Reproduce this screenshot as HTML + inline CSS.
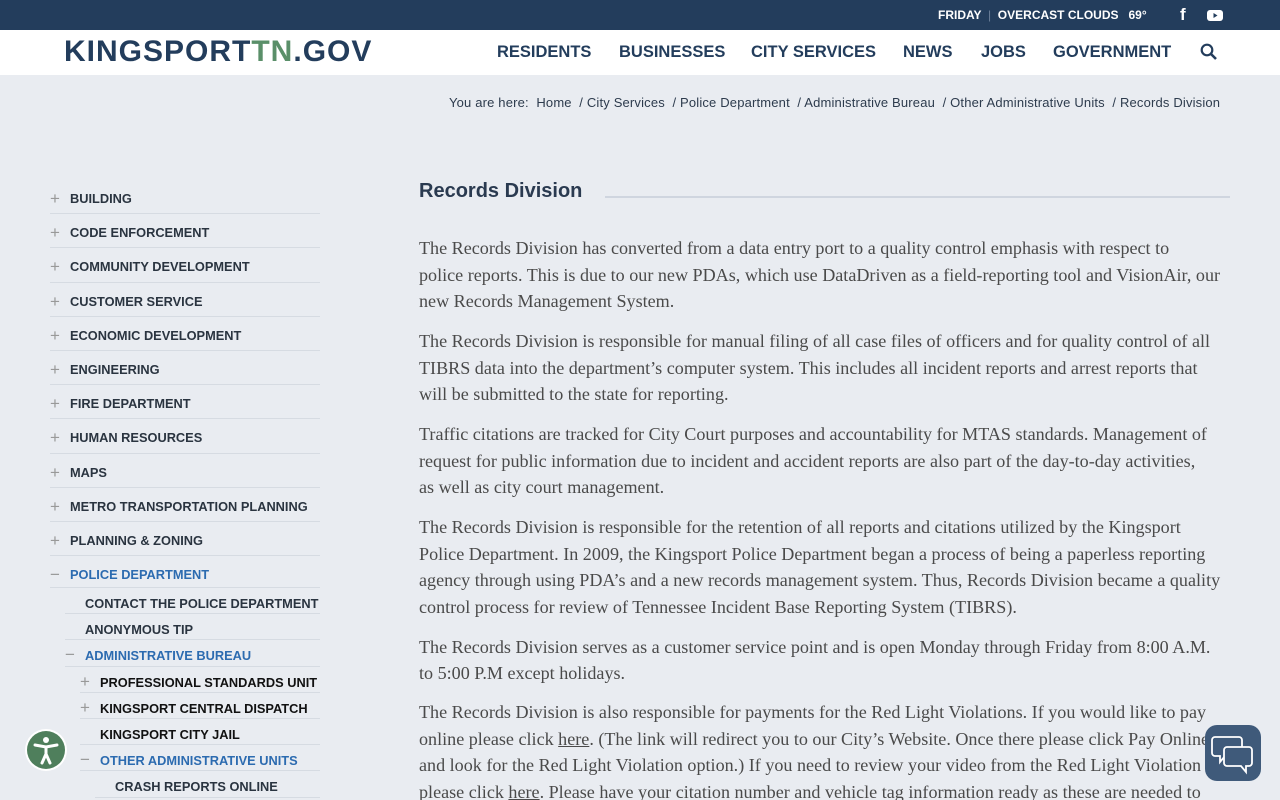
<!DOCTYPE html>
<html style="overflow:hidden;height:800px"><head><meta charset="utf-8"><style>
*{margin:0;padding:0;box-sizing:border-box}
body{width:1280px;height:800px;overflow:hidden;background:#e9ecf1;font-family:"Liberation Sans",sans-serif;position:relative}
.top{position:absolute;left:0;top:0;width:1280px;height:30px;background:#233d5c;color:#fff;font-weight:bold;font-size:12px}
.top .w{position:absolute;top:8px;left:938px;letter-spacing:0px;white-space:nowrap}
.hdr{position:absolute;top:30px;left:0;width:1280px;height:45px;background:#fff}
.logo{position:absolute;left:64px;top:5px;font-size:30px;font-weight:bold;color:#233d5c;letter-spacing:1px}
.logo span{color:#5a8f69}
.nav{position:absolute;top:13px;font-size:16.5px;font-weight:bold;color:#233d5c}
.bc{position:absolute;top:95px;left:449px;font-size:13px;color:#2d3b4d;white-space:nowrap;letter-spacing:0.17px}
.side{position:absolute;left:50px;top:180px;width:270px}
.it{position:relative;height:34.2px;border-bottom:1px solid #d6dbe2;font-size:12.8px;font-weight:bold;color:#2a3440;white-space:nowrap}
.it .t{position:absolute;top:11px}
.it .p{position:absolute;top:9px;color:#999;font-weight:normal;font-size:17px}
.sub{height:26.2px}
.sub .t{top:8px}
.sub .p{top:5px}
.blue{color:#2c6bb0!important}
h1{position:absolute;left:419px;top:180px;font-size:20px;font-weight:bold;color:#2a3a50}
.hl{position:absolute;left:605px;top:196px;width:625px;height:2px;background:#cfd5df}
.txt{position:absolute;left:419px;top:235px;font-family:"Liberation Serif",serif;font-size:18.1px;color:#4a4a4a;line-height:26.5px}
.txt div div{white-space:nowrap}
.pa{margin-bottom:13.5px}
u{text-decoration:underline}
</style></head><body>
<div class="top"><div class="w">FRIDAY &nbsp;<span style="color:#6b7f98;font-weight:normal">|</span>&nbsp; OVERCAST CLOUDS &nbsp;&nbsp;69°</div>
<div style="position:absolute;left:1180px;top:5px;font-size:17px">f</div>
<svg style="position:absolute;left:1207px;top:10px" width="16" height="11"><rect width="16" height="11" rx="3" fill="#fff"/><path d="M6.5 3v5l4-2.5z" fill="#233d5c"/></svg>
</div>
<div class="hdr"><div class="logo">KINGSPORT<span>TN</span>.GOV</div>
<div class="nav" style="left:497px">RESIDENTS</div>
<div class="nav" style="left:619px">BUSINESSES</div>
<div class="nav" style="left:751px">CITY SERVICES</div>
<div class="nav" style="left:903px">NEWS</div>
<div class="nav" style="left:981px">JOBS</div>
<div class="nav" style="left:1053px">GOVERNMENT</div>
<svg style="position:absolute;left:1200px;top:13px" width="18" height="18"><circle cx="7" cy="7" r="5.3" fill="none" stroke="#233d5c" stroke-width="2.2"/><path d="M11 11l5 5" stroke="#233d5c" stroke-width="2.6"/></svg>
</div>
<div class="bc">You are here: &nbsp;Home &nbsp;/ City Services &nbsp;/ Police Department &nbsp;/ Administrative Bureau &nbsp;/ Other Administrative Units &nbsp;/ Records Division</div>
<div class="side">
<div class="it"><span class="p" style="left:0">+</span><span class="t" style="left:20px">BUILDING</span></div>
<div class="it"><span class="p" style="left:0">+</span><span class="t" style="left:20px">CODE ENFORCEMENT</span></div>
<div class="it"><span class="p" style="left:0">+</span><span class="t" style="left:20px">COMMUNITY DEVELOPMENT</span></div>
<div class="it"><span class="p" style="left:0">+</span><span class="t" style="left:20px">CUSTOMER SERVICE</span></div>
<div class="it"><span class="p" style="left:0">+</span><span class="t" style="left:20px">ECONOMIC DEVELOPMENT</span></div>
<div class="it"><span class="p" style="left:0">+</span><span class="t" style="left:20px">ENGINEERING</span></div>
<div class="it"><span class="p" style="left:0">+</span><span class="t" style="left:20px">FIRE DEPARTMENT</span></div>
<div class="it"><span class="p" style="left:0">+</span><span class="t" style="left:20px">HUMAN RESOURCES</span></div>
<div class="it"><span class="p" style="left:0">+</span><span class="t" style="left:20px">MAPS</span></div>
<div class="it"><span class="p" style="left:0">+</span><span class="t" style="left:20px">METRO TRANSPORTATION PLANNING</span></div>
<div class="it"><span class="p" style="left:0">+</span><span class="t" style="left:20px">PLANNING &amp; ZONING</span></div>
<div class="it" style="height:32px"><span class="p" style="left:0">−</span><span class="t blue" style="left:20px">POLICE DEPARTMENT</span></div>
<div class="it sub" style="margin-left:15px"><span class="t" style="left:20px">CONTACT THE POLICE DEPARTMENT</span></div>
<div class="it sub" style="margin-left:15px"><span class="t" style="left:20px">ANONYMOUS TIP</span></div>
<div class="it sub" style="margin-left:15px"><span class="p" style="left:0">−</span><span class="t blue" style="left:20px">ADMINISTRATIVE BUREAU</span></div>
<div class="it sub" style="margin-left:30px"><span class="p" style="left:0">+</span><span class="t" style="left:20px;color:#111">PROFESSIONAL STANDARDS UNIT</span></div>
<div class="it sub" style="margin-left:30px"><span class="p" style="left:0">+</span><span class="t" style="left:20px;color:#111">KINGSPORT CENTRAL DISPATCH</span></div>
<div class="it sub" style="margin-left:30px"><span class="t" style="left:20px;color:#111">KINGSPORT CITY JAIL</span></div>
<div class="it sub" style="margin-left:30px"><span class="p" style="left:0">−</span><span class="t blue" style="left:20px">OTHER ADMINISTRATIVE UNITS</span></div>
<div class="it sub" style="margin-left:45px"><span class="t" style="left:20px">CRASH REPORTS ONLINE</span></div>
</div>
<h1>Records Division</h1><div class="hl"></div>
<div class="txt">
<div class="pa"><div>The Records Division has converted from a data entry port to a quality control emphasis with respect to</div><div>police reports. This is due to our new PDAs, which use DataDriven as a field-reporting tool and VisionAir, our</div><div>new Records Management System.</div></div>
<div class="pa"><div>The Records Division is responsible for manual filing of all case files of officers and for quality control of all</div><div>TIBRS data into the department’s computer system. This includes all incident reports and arrest reports that</div><div>will be submitted to the state for reporting.</div></div>
<div class="pa"><div>Traffic citations are tracked for City Court purposes and accountability for MTAS standards. Management of</div><div>request for public information due to incident and accident reports are also part of the day-to-day activities,</div><div>as well as city court management.</div></div>
<div class="pa"><div>The Records Division is responsible for the retention of all reports and citations utilized by the Kingsport</div><div>Police Department. In 2009, the Kingsport Police Department began a process of being a paperless reporting</div><div>agency through using PDA’s and a new records management system. Thus, Records Division became a quality</div><div>control process for review of Tennessee Incident Base Reporting System (TIBRS).</div></div>
<div class="pa"><div>The Records Division serves as a customer service point and is open Monday through Friday from 8:00 A.M.</div><div>to 5:00 P.M except holidays.</div></div>
<div class="pa" style="position:absolute;top:464px;left:0"><div>The Records Division is also responsible for payments for the Red Light Violations. If you would like to pay</div><div>online please click <u>here</u>. (The link will redirect you to our City’s Website. Once there please click Pay Online</div><div>and look for the Red Light Violation option.) If you need to review your video from the Red Light Violation</div><div>please click <u>here</u>. Please have your citation number and vehicle tag information ready as these are needed to</div></div>
</div>
<svg style="position:absolute;left:24px;top:728px" width="44" height="44"><circle cx="22" cy="22" r="21" fill="#fff"/><circle cx="22" cy="22" r="19" fill="#4f7f5c"/><circle cx="22" cy="12" r="3" fill="#fff"/><path d="M11 17l11 2 11-2M22 19v7l-4 9M22 26l4 9" stroke="#fff" stroke-width="3" fill="none" stroke-linecap="round"/></svg>
<svg style="position:absolute;left:1205px;top:725px" width="56" height="56"><rect width="56" height="56" rx="12" fill="#3f5a7a"/><path d="M10 12h24a3 3 0 0 1 3 3v13a3 3 0 0 1-3 3H20l-5 6v-6h-5a3 3 0 0 1-3-3V15a3 3 0 0 1 3-3z" fill="#3f5a7a" stroke="#fff" stroke-width="1.8"/><path d="M22 22h22a3 3 0 0 1 3 3v13a3 3 0 0 1-3 3h-3v6l-5-6H22a3 3 0 0 1-3-3V25a3 3 0 0 1 3-3z" fill="#3f5a7a" stroke="#fff" stroke-width="1.8"/></svg>
</body></html>
